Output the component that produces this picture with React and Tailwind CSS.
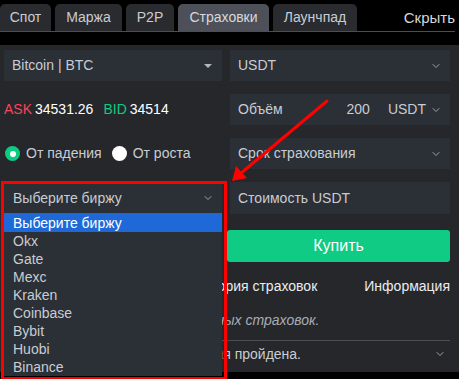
import { ChevronDown } from 'lucide-react'

const TABS = [
  { label: 'Спот', w: 'w-[51px]' },
  { label: 'Маржа', w: 'w-[67px]' },
  { label: 'P2P', w: 'w-[48px]' },
  { label: 'Страховки', w: 'w-[91px]', active: true },
  { label: 'Лаунчпад', w: 'w-[84px]' },
]

const EXCHANGES = ['Okx', 'Gate', 'Mexc', 'Kraken', 'Coinbase', 'Bybit', 'Huobi', 'Binance']

const Chevron = () => <ChevronDown size={12} strokeWidth={2} className="text-[#9ea3ab]" />

function Box({ children, className = '' }) {
  return (
    <div className={`h-[31px] flex items-center bg-[#2b2f36] px-[8px] text-[14px] text-[#c9ccd2] ${className}`}>
      {children}
    </div>
  )
}

export default function App() {
  return (
    <div className="relative w-[459px] h-[379px] bg-black overflow-hidden font-['Liberation_Sans',Arial,sans-serif]">
      {/* вкладки */}
      <div className="flex items-end h-[32px] pt-[4px] mr-[4px] border-b border-[#4b4e55]">
        <div className="flex gap-1 h-full">
          {TABS.map((t) => (
            <div
              key={t.label}
              className={`${t.w} h-full -mb-px flex items-center justify-center rounded-t-[5px] text-[14px] ${
                t.active ? 'bg-[#4d5058] text-[#d6d9de]' : 'bg-[#2a2b2f] text-[#c9ccd2]'
              }`}
            >
              {t.label}
            </div>
          ))}
        </div>
        <div className="ml-auto self-center text-[15px] text-[#d6d9de] pt-[1px]">Скрыть</div>
      </div>

      {/* панель */}
      <div className="mt-[13px] h-[327px] bg-[#25272b] pt-[5px] pl-[4px] pr-[9px]">
        <div className="grid grid-cols-[218px_220px] gap-x-2 gap-y-[13px]">
          <Box className="justify-between pr-[10px]">
            <span>Bitcoin | BTC</span>
            <span className="w-0 h-0 border-x-[4px] border-x-transparent border-t-[4px] border-t-[#b3b7bd]" />
          </Box>
          <Box className="justify-between">
            <span>USDT</span>
            <Chevron />
          </Box>

          <div className="h-[31px] flex items-center text-[14px]">
            <span className="text-[#f6465d]">ASK</span>
            <span className="ml-[3px] text-white">34531.26</span>
            <span className="ml-[10px] text-[#0ecb81]">BID</span>
            <span className="ml-[3px] text-white">34514</span>
          </div>
          <Box>
            <span>Объём</span>
            <span className="ml-auto">200</span>
            <span className="ml-[18px]">USDT</span>
            <span className="ml-[4px]"><Chevron /></span>
          </Box>

          <div className="h-[31px] flex items-center text-[14px] text-[#c9ccd2]">
            <span className="w-[15px] h-[15px] rounded-full bg-[#0ecb81] flex items-center justify-center ml-[1px]">
              <span className="w-[6px] h-[6px] rounded-full bg-white" />
            </span>
            <span className="ml-[6px]">От падения</span>
            <span className="ml-[10px] w-[15px] h-[15px] rounded-full bg-white" />
            <span className="ml-[6px]">От роста</span>
          </div>
          <Box className="justify-between">
            <span>Срок страхования</span>
            <Chevron />
          </Box>

          <div className="relative">
            <Box className="justify-between h-[32px] pl-[9px]">
              <span>Выберите биржу</span>
              <Chevron />
            </Box>
            {/* раскрытый список */}
            <div className="absolute left-0 top-[31px] w-[218px] z-10 bg-[#2b2f36] border-t border-[#5a5e66] text-[14px] text-[#c9ccd2]">
              <div className="h-[18px] flex items-center pl-[9px] bg-[#1e69d7] text-white">Выберите биржу</div>
              {EXCHANGES.map((e) => (
                <div key={e} className="h-[18px] flex items-center pl-[9px]">{e}</div>
              ))}
            </div>
          </div>
          <Box className="h-[32px]">
            <span>Стоимость USDT</span>
          </Box>
        </div>

        <div className="flex justify-end mt-[16px]">
          <button className="w-[223px] h-[32px] rounded-[3px] bg-[#0fcb84] text-white text-[16px]">Купить</button>
        </div>

        <div className="flex justify-end items-center h-[20px] mt-[14px] text-[14px] text-[#eaecef]">
          <span>История страховок</span>
          <span className="ml-[47px]">Информация</span>
        </div>

        <div className="mt-[14px] h-[20px] flex items-center pl-[138px] text-[14px] italic text-[#a9adb4]">
          Нет активных страховок.
        </div>

        <div className="mt-[10px] border-t border-[#4b4e55] h-[27px] flex items-center text-[14px] text-[#c9ccd2]">
          <span className="w-[297px] text-right">Верификация пройдена.</span>
          <span className="ml-auto mr-[4px]"><Chevron /></span>
        </div>
      </div>

      {/* аннотация */}
      <div className="absolute left-[1px] top-[181px] w-[226px] h-[199px] border-[3px] border-[#ff0000] z-20 pointer-events-none" />
      <svg className="absolute left-0 top-0 z-20 pointer-events-none" width="459" height="379">
        <line x1="327" y1="101" x2="240" y2="174" stroke="#ff0000" strokeWidth="3" strokeLinecap="round" />
        <polygon points="232,181 236,166 247,178" fill="#ff0000" />
      </svg>
    </div>
  )
}
